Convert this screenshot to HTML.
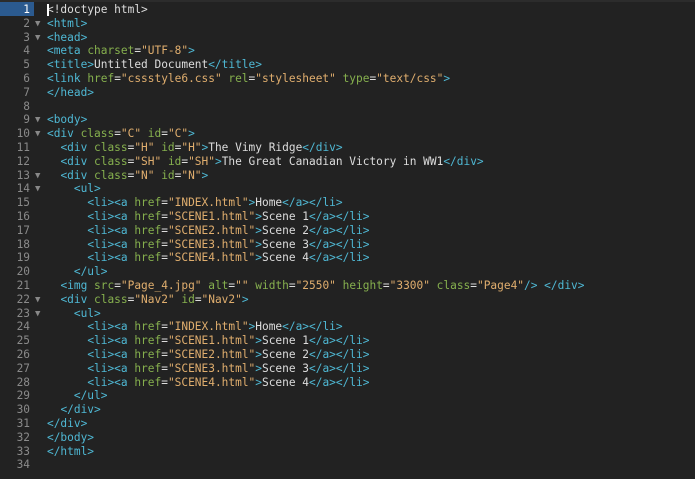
<!DOCTYPE html>
<html><head><meta charset="utf-8"><style>
html,body{margin:0;padding:0;background:#222;width:695px;height:479px;overflow:hidden}
body{font-family:"DejaVu Sans Mono","Liberation Mono",monospace;font-size:11.16px;color:#ddd}
.top{position:absolute;left:0;top:0;width:695px;height:2px;background:#2c2c2c}
.hl{position:absolute;left:0;top:2px;width:34px;height:14px;background:#2b5a8f}
.w{position:absolute;left:0;top:1px;width:695px;height:478px}
.row{position:absolute;left:0;height:14px;line-height:14px;white-space:pre;width:695px}
.n{position:absolute;left:0;width:30px;text-align:right;color:#8a8a8a}
.r1 .n{color:#fff}
.ar{position:absolute;left:35px;color:#888;font-size:9px}
.c{position:absolute;left:47px}
.t{color:#4fb8d4}.a{color:#86b04e}.s{color:#e0ae6e}
.cur{position:absolute;left:47px;top:3px;width:1.5px;height:12px;background:#fff}
</style></head><body>
<div class="top"></div><div class="hl"></div>
<div class="w">
<div class="row r1" style="top:2px"><span class="n">1</span><span class="c">&lt;!doctype html&gt;</span></div>
<div class="cur"></div>
<div class="row" style="top:15.8px"><span class="n">2</span><span class="ar">▼</span><span class="c"><span class="t">&lt;html&gt;</span></span></div>
<div class="row" style="top:29.6px"><span class="n">3</span><span class="ar">▼</span><span class="c"><span class="t">&lt;head&gt;</span></span></div>
<div class="row" style="top:43.4px"><span class="n">4</span><span class="c"><span class="t">&lt;meta </span><span class="a">charset</span>=<span class="s">"UTF-8"</span><span class="t">&gt;</span></span></div>
<div class="row" style="top:57.2px"><span class="n">5</span><span class="c"><span class="t">&lt;title&gt;</span>Untitled Document<span class="t">&lt;/title&gt;</span></span></div>
<div class="row" style="top:71px"><span class="n">6</span><span class="c"><span class="t">&lt;link </span><span class="a">href</span>=<span class="s">"cssstyle6.css"</span> <span class="a">rel</span>=<span class="s">"stylesheet"</span> <span class="a">type</span>=<span class="s">"text/css"</span><span class="t">&gt;</span></span></div>
<div class="row" style="top:84.8px"><span class="n">7</span><span class="c"><span class="t">&lt;/head&gt;</span></span></div>
<div class="row" style="top:98.6px"><span class="n">8</span></div>
<div class="row" style="top:112.4px"><span class="n">9</span><span class="ar">▼</span><span class="c"><span class="t">&lt;body&gt;</span></span></div>
<div class="row" style="top:126.2px"><span class="n">10</span><span class="ar">▼</span><span class="c"><span class="t">&lt;div </span><span class="a">class</span>=<span class="s">"C"</span> <span class="a">id</span>=<span class="s">"C"</span><span class="t">&gt;</span></span></div>
<div class="row" style="top:140px"><span class="n">11</span><span class="c">  <span class="t">&lt;div </span><span class="a">class</span>=<span class="s">"H"</span> <span class="a">id</span>=<span class="s">"H"</span><span class="t">&gt;</span>The Vimy Ridge<span class="t">&lt;/div&gt;</span></span></div>
<div class="row" style="top:153.8px"><span class="n">12</span><span class="c">  <span class="t">&lt;div </span><span class="a">class</span>=<span class="s">"SH"</span> <span class="a">id</span>=<span class="s">"SH"</span><span class="t">&gt;</span>The Great Canadian Victory in WW1<span class="t">&lt;/div&gt;</span></span></div>
<div class="row" style="top:167.6px"><span class="n">13</span><span class="ar">▼</span><span class="c">  <span class="t">&lt;div </span><span class="a">class</span>=<span class="s">"N"</span> <span class="a">id</span>=<span class="s">"N"</span><span class="t">&gt;</span></span></div>
<div class="row" style="top:181.4px"><span class="n">14</span><span class="ar">▼</span><span class="c">    <span class="t">&lt;ul&gt;</span></span></div>
<div class="row" style="top:195.2px"><span class="n">15</span><span class="c">      <span class="t">&lt;li&gt;&lt;a </span><span class="a">href</span>=<span class="s">"INDEX.html"</span><span class="t">&gt;</span>Home<span class="t">&lt;/a&gt;&lt;/li&gt;</span></span></div>
<div class="row" style="top:209px"><span class="n">16</span><span class="c">      <span class="t">&lt;li&gt;&lt;a </span><span class="a">href</span>=<span class="s">"SCENE1.html"</span><span class="t">&gt;</span>Scene 1<span class="t">&lt;/a&gt;&lt;/li&gt;</span></span></div>
<div class="row" style="top:222.8px"><span class="n">17</span><span class="c">      <span class="t">&lt;li&gt;&lt;a </span><span class="a">href</span>=<span class="s">"SCENE2.html"</span><span class="t">&gt;</span>Scene 2<span class="t">&lt;/a&gt;&lt;/li&gt;</span></span></div>
<div class="row" style="top:236.6px"><span class="n">18</span><span class="c">      <span class="t">&lt;li&gt;&lt;a </span><span class="a">href</span>=<span class="s">"SCENE3.html"</span><span class="t">&gt;</span>Scene 3<span class="t">&lt;/a&gt;&lt;/li&gt;</span></span></div>
<div class="row" style="top:250.4px"><span class="n">19</span><span class="c">      <span class="t">&lt;li&gt;&lt;a </span><span class="a">href</span>=<span class="s">"SCENE4.html"</span><span class="t">&gt;</span>Scene 4<span class="t">&lt;/a&gt;&lt;/li&gt;</span></span></div>
<div class="row" style="top:264.2px"><span class="n">20</span><span class="c">    <span class="t">&lt;/ul&gt;</span></span></div>
<div class="row" style="top:278px"><span class="n">21</span><span class="c">  <span class="t">&lt;img </span><span class="a">src</span>=<span class="s">"Page_4.jpg"</span> <span class="a">alt</span>=<span class="s">""</span> <span class="a">width</span>=<span class="s">"2550"</span> <span class="a">height</span>=<span class="s">"3300"</span> <span class="a">class</span>=<span class="s">"Page4"</span><span class="t">/&gt; &lt;/div&gt;</span></span></div>
<div class="row" style="top:291.8px"><span class="n">22</span><span class="ar">▼</span><span class="c">  <span class="t">&lt;div </span><span class="a">class</span>=<span class="s">"Nav2"</span> <span class="a">id</span>=<span class="s">"Nav2"</span><span class="t">&gt;</span></span></div>
<div class="row" style="top:305.6px"><span class="n">23</span><span class="ar">▼</span><span class="c">    <span class="t">&lt;ul&gt;</span></span></div>
<div class="row" style="top:319.4px"><span class="n">24</span><span class="c">      <span class="t">&lt;li&gt;&lt;a </span><span class="a">href</span>=<span class="s">"INDEX.html"</span><span class="t">&gt;</span>Home<span class="t">&lt;/a&gt;&lt;/li&gt;</span></span></div>
<div class="row" style="top:333.2px"><span class="n">25</span><span class="c">      <span class="t">&lt;li&gt;&lt;a </span><span class="a">href</span>=<span class="s">"SCENE1.html"</span><span class="t">&gt;</span>Scene 1<span class="t">&lt;/a&gt;&lt;/li&gt;</span></span></div>
<div class="row" style="top:347px"><span class="n">26</span><span class="c">      <span class="t">&lt;li&gt;&lt;a </span><span class="a">href</span>=<span class="s">"SCENE2.html"</span><span class="t">&gt;</span>Scene 2<span class="t">&lt;/a&gt;&lt;/li&gt;</span></span></div>
<div class="row" style="top:360.8px"><span class="n">27</span><span class="c">      <span class="t">&lt;li&gt;&lt;a </span><span class="a">href</span>=<span class="s">"SCENE3.html"</span><span class="t">&gt;</span>Scene 3<span class="t">&lt;/a&gt;&lt;/li&gt;</span></span></div>
<div class="row" style="top:374.6px"><span class="n">28</span><span class="c">      <span class="t">&lt;li&gt;&lt;a </span><span class="a">href</span>=<span class="s">"SCENE4.html"</span><span class="t">&gt;</span>Scene 4<span class="t">&lt;/a&gt;&lt;/li&gt;</span></span></div>
<div class="row" style="top:388.4px"><span class="n">29</span><span class="c">    <span class="t">&lt;/ul&gt;</span></span></div>
<div class="row" style="top:402.2px"><span class="n">30</span><span class="c">  <span class="t">&lt;/div&gt;</span></span></div>
<div class="row" style="top:416px"><span class="n">31</span><span class="c"><span class="t">&lt;/div&gt;</span></span></div>
<div class="row" style="top:429.8px"><span class="n">32</span><span class="c"><span class="t">&lt;/body&gt;</span></span></div>
<div class="row" style="top:443.6px"><span class="n">33</span><span class="c"><span class="t">&lt;/html&gt;</span></span></div>
<div class="row" style="top:457.4px"><span class="n">34</span></div>
</div>
</body></html>
